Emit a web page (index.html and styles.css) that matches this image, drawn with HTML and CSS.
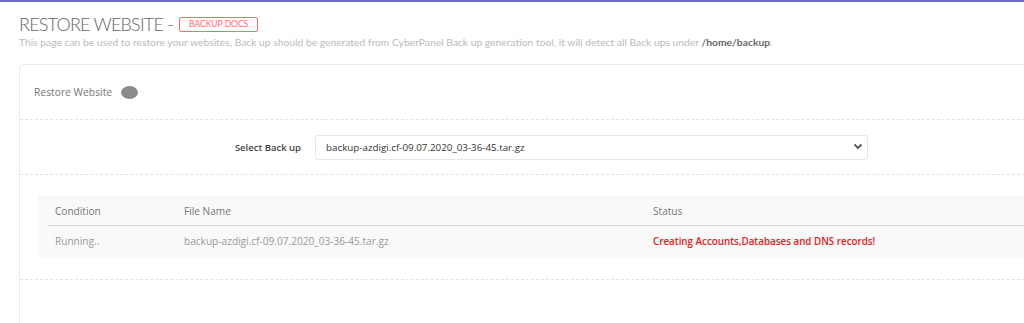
FILE: index.html
```html
<!DOCTYPE html>
<html lang="en">
<head>
    <meta charset="UTF-8">
    <meta name="viewport" content="width=device-width, initial-scale=1.0">
    <title>Restore Website</title>
    <link rel="stylesheet" href="styles.css">
</head>
<body>
    <div class="topline"></div>
    <div class="page">
        <div class="page-title">
            <h2 class="title">RESTORE WEBSITE - <a class="docs" href="#">BACKUP DOCS</a></h2>
            <p class="subtitle">This page can be used to restore your websites, Back up should be generated from CyberPanel Back up generation tool, it will detect all Back ups under <b>/home/backup</b>.</p>
        </div>

        <div class="panel">
            <div class="panel-head">
                <span class="panel-name">Restore Website</span>
                <span class="loader"></span>
            </div>

            <div class="form-row">
                <label class="form-label" for="backup">Select Back up</label>
                <div class="select-wrap">
                    <select id="backup" class="form-select">
                        <option>backup-azdigi.cf-09.07.2020_03-36-45.tar.gz</option>
                    </select>
                    <svg class="caret" width="10" height="7" viewBox="0 0 10 7"><path d="M1.5 1.5 L5 5 L8.5 1.5" fill="none" stroke="#555" stroke-width="1.8"/></svg>
                </div>
            </div>

            <div class="table-row">
                <table class="status-table">
                    <thead>
                        <tr>
                            <th class="col-cond">Condition</th>
                            <th class="col-file">File Name</th>
                            <th>Status</th>
                        </tr>
                    </thead>
                    <tbody>
                        <tr>
                            <td>Running..</td>
                            <td>backup-azdigi.cf-09.07.2020_03-36-45.tar.gz</td>
                            <td class="status-msg">Creating Accounts,Databases and DNS records!</td>
                        </tr>
                    </tbody>
                </table>
            </div>

            <div class="panel-foot"></div>
        </div>
    </div>
</body>
</html>
```

FILE: styles.css
```css
html, body {
    margin: 0;
    background: #fff;
    overflow: hidden;
    height: 323px;
}

body {
    font-family: "Open Sans", Arial, sans-serif;
    color: #555;
}

.topline {
    height: 2px;
    background-color: #6c6cc4;
}

.page {
    padding: 0 0 0 19px;
}

.page-title {
    padding-top: 10px;
}

.title {
    margin: 0;
    font-family: Lato, sans-serif;
    font-weight: 300;
    font-size: 18px;
    letter-spacing: -0.8px;
    line-height: 24px;
    color: #666;
    display: flex;
    align-items: center;
    gap: 6px;
}

.docs {
    display: inline-block;
    border: 1.5px solid #ff6b6b;
    border-radius: 2px;
    color: #ff6b6b;
    font-size: 8.5px;
    font-weight: 400;
    letter-spacing: 0;
    line-height: 11px;
    padding: 1px 9px;
    text-decoration: none;
}

.subtitle {
    margin: 0;
    font-family: Lato, sans-serif;
    font-size: 10.3px;
    line-height: 13px;
    color: #bbb;
}

.subtitle b {
    color: #666;
    font-weight: 700;
}

.panel {
    margin-top: 15px;
    width: 1100px;
    height: 300px;
    border: 1px solid #ebebeb;
    border-radius: 4px;
}

.panel-head {
    display: flex;
    align-items: center;
    gap: 9px;
    height: 54px;
    padding-left: 14px;
    border-bottom: 1px dashed #e3e3e3;
}

.panel-name {
    font-size: 10.3px;
    color: #777;
}

.loader {
    width: 17px;
    height: 13px;
    border-radius: 50%;
    background-color: #8a8a8c;
}

.form-row {
    display: flex;
    align-items: center;
    height: 54px;
    border-bottom: 1px dashed #e3e3e3;
}

.form-label {
    width: 281px;
    text-align: right;
    padding-right: 14px;
    font-size: 9.5px;
    font-weight: 600;
    color: #444;
}

.select-wrap {
    position: relative;
    width: 553px;
}

.form-select {
    width: 100%;
    height: 25px;
    padding: 0 10px;
    border: 1px solid #e2e8ee;
    border-radius: 3px;
    background: #fff;
    font-family: "Open Sans", Arial, sans-serif;
    font-size: 9.8px;
    color: #333;
    appearance: none;
    -webkit-appearance: none;
}

.caret {
    position: absolute;
    right: 5px;
    top: 9px;
}

.table-row {
    padding: 21px 0 22px 18px;
    border-bottom: 1px dashed #e3e3e3;
}

.status-table {
    width: 1082px;
    border-collapse: collapse;
    background-color: #f9f9f9;
    font-size: 10.1px;
}

.status-table th {
    text-align: left;
    font-weight: 400;
    color: #777;
    padding: 7px 17px 8px;
    height: 15px;
    background: linear-gradient(#d5d5d5, #d5d5d5) right bottom / 100% 1px no-repeat;
}

.status-table th:first-child {
    background-size: calc(100% - 10px) 1px;
}

.status-table td {
    color: #999;
    padding: 8px 17px 9px;
    height: 13px;
}

.col-cond {
    width: 95px;
}

.col-file {
    width: 435px;
}

.status-table td.status-msg {
    color: #f01818;
    font-weight: 600;
    font-size: 9.8px;
}
```
